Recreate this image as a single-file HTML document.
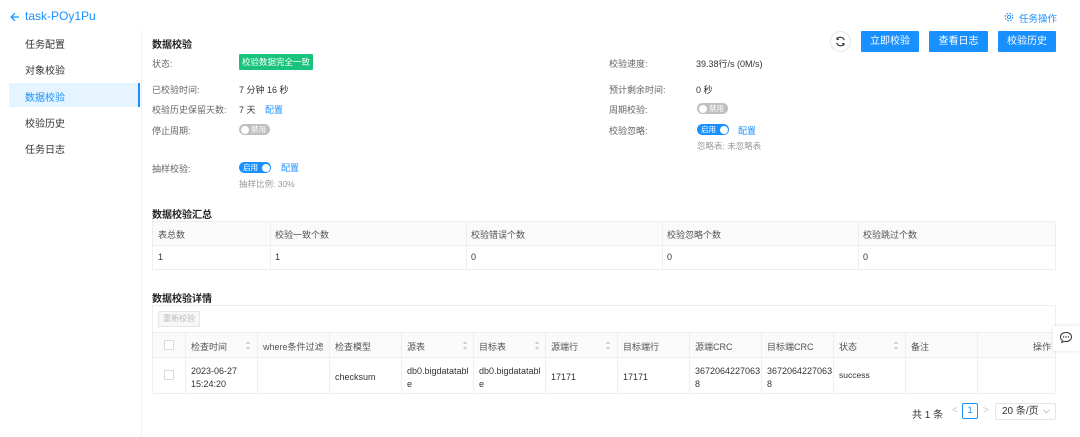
<!DOCTYPE html>
<html><head><meta charset="utf-8"><style>
*{margin:0;padding:0;box-sizing:border-box}
body{width:1080px;height:437px;background:#fff;font-family:"Liberation Sans","Noto Sans CJK SC",sans-serif;color:#333;position:relative;overflow:hidden;font-size:9px}
.a{position:absolute;white-space:nowrap}
.lbl{color:#666;font-size:9px}
.val{color:#333;font-size:9px}
.link{color:#1890ff;font-size:9px}
.nav{position:absolute;left:25px;font-size:10px;color:#333}
.btn{position:absolute;top:31px;height:21px;background:#1890ff;color:#fff;font-size:10px;text-align:center;line-height:21px;border-radius:1px}
.sw{position:absolute;height:11px;border-radius:6px;font-size:7.5px;line-height:11px;color:#fff}
.sw.off{background:#bfbfbf;width:31px}
.sw.on{background:#1890ff;width:32px}
.sw .k{position:absolute;top:1.5px;width:8px;height:8px;border-radius:50%;background:#fff}
h3{position:absolute;font-size:10px;font-weight:bold;color:#222;white-space:nowrap}
.cell{position:absolute;font-size:9px;color:#333;white-space:nowrap}
.hc{color:#555}
.vl{position:absolute;width:1px;background:#eee}
.sort{position:absolute;width:5px;height:9px}
.sort:before,.sort:after{content:"";position:absolute;left:0;border-left:2.5px solid transparent;border-right:2.5px solid transparent}
.sort:before{top:0;border-bottom:3px solid #ccc}
.sort:after{bottom:0;border-top:3px solid #ccc}
.cb{position:absolute;width:10px;height:10px;border:1px solid #d9d9d9;border-radius:1px;background:#fff}
</style></head><body>
<svg class="a" style="left:10px;top:12px" width="10" height="10" viewBox="0 0 10 10"><path d="M9 5H1.5M5 1.2L1.2 5 5 8.8" stroke="#1890ff" stroke-width="1.2" fill="none"/></svg>
<div class="a" style="left:25px;top:9px;font-size:12px;color:#1890ff">task-POy1Pu</div>
<svg class="a" style="left:1004px;top:12px" width="10" height="10" viewBox="0 0 10 10"><circle cx="5" cy="5" r="1.6" stroke="#1890ff" fill="none" stroke-width="0.9"/><circle cx="5" cy="5" r="3.8" stroke="#1890ff" fill="none" stroke-width="0.9" stroke-dasharray="2 1"/></svg>
<div class="a" style="left:1019px;top:11px;font-size:9.5px;color:#1890ff">任务操作</div>
<div class="a" style="left:141px;top:30px;width:1px;height:407px;background:#f0f0f0"></div>
<div class="nav" style="top:36px">任务配置</div>
<div class="nav" style="top:62px">对象校验</div>
<div class="a" style="left:9px;top:83px;width:131px;height:24px;background:#e6f4ff;border-right:2px solid #1890ff"></div>
<div class="nav" style="top:89px;color:#1890ff">数据校验</div>
<div class="nav" style="top:115px">校验历史</div>
<div class="nav" style="top:141px">任务日志</div>
<h3 style="left:152px;top:36px">数据校验</h3>
<div class="a" style="left:830px;top:31px;width:21px;height:21px;border:1px solid #e5e5e5;border-radius:50%"></div>
<svg class="a" style="left:835px;top:36px" width="11" height="11" viewBox="0 0 11 11"><path d="M9.3 4.2A4 4 0 0 0 2 3.2M1.7 6.8A4 4 0 0 0 9 7.8" stroke="#333" stroke-width="1.1" fill="none"/><path d="M2 1.4V3.4H4M9 9.6V7.6H7" stroke="#333" stroke-width="1" fill="none"/></svg>
<div class="btn" style="left:861px;width:58px">立即校验</div>
<div class="btn" style="left:929px;width:59px">查看日志</div>
<div class="btn" style="left:998px;width:58px">校验历史</div>

<div class="a lbl" style="left:152px;top:57px">状态:</div>
<div class="a" style="left:239px;top:54px;width:74px;height:16px;background:#19c37d;color:#fff;font-size:8.5px;line-height:16px;text-align:center;border-radius:1px">校验数据完全一致</div>
<div class="a lbl" style="left:152px;top:83px">已校验时间:</div>
<div class="a val" style="left:239px;top:83px">7 分钟 16 秒</div>
<div class="a lbl" style="left:152px;top:103px">校验历史保留天数:</div>
<div class="a val" style="left:239px;top:103px">7 天</div>
<div class="a link" style="left:265px;top:103px">配置</div>
<div class="a lbl" style="left:152px;top:124px">停止周期:</div>
<div class="sw off" style="left:239px;top:124px"><div class="k" style="left:1.5px"></div><span style="position:absolute;left:12px">禁用</span></div>
<div class="a lbl" style="left:152px;top:162px">抽样校验:</div>
<div class="sw on" style="left:239px;top:162px"><span style="position:absolute;left:4px">启用</span><div class="k" style="right:1.5px"></div></div>
<div class="a link" style="left:281px;top:161px">配置</div>
<div class="a" style="left:239px;top:178px;color:#999;font-size:8.5px">抽样比例: 30%</div>

<div class="a lbl" style="left:609px;top:57px">校验速度:</div>
<div class="a val" style="left:696px;top:57px">39.38行/s (0M/s)</div>
<div class="a lbl" style="left:609px;top:83px">预计剩余时间:</div>
<div class="a val" style="left:696px;top:83px">0 秒</div>
<div class="a lbl" style="left:609px;top:103px">周期校验:</div>
<div class="sw off" style="left:697px;top:103px"><div class="k" style="left:1.5px"></div><span style="position:absolute;left:12px">禁用</span></div>
<div class="a lbl" style="left:609px;top:124px">校验忽略:</div>
<div class="sw on" style="left:697px;top:124px"><span style="position:absolute;left:4px">启用</span><div class="k" style="right:1.5px"></div></div>
<div class="a link" style="left:738px;top:124px">配置</div>
<div class="a" style="left:697px;top:140px;color:#999;font-size:8.5px">忽略表: 未忽略表</div>

<h3 style="left:152px;top:206px">数据校验汇总</h3>
<div class="a" style="left:152px;top:221px;width:904px;height:49px;border:1px solid #eee"></div>
<div class="a" style="left:153px;top:222px;width:902px;height:24px;background:#fafafa;border-bottom:1px solid #eee"></div>
<div class="vl" style="left:270px;top:222px;height:47px"></div>
<div class="vl" style="left:466px;top:222px;height:47px"></div>
<div class="vl" style="left:662px;top:222px;height:47px"></div>
<div class="vl" style="left:858px;top:222px;height:47px"></div>
<div class="cell hc" style="left:158px;top:228px">表总数</div>
<div class="cell hc" style="left:275px;top:228px">校验一致个数</div>
<div class="cell hc" style="left:471px;top:228px">校验错误个数</div>
<div class="cell hc" style="left:667px;top:228px">校验忽略个数</div>
<div class="cell hc" style="left:863px;top:228px">校验跳过个数</div>
<div class="cell" style="left:158px;top:252px">1</div>
<div class="cell" style="left:275px;top:252px">1</div>
<div class="cell" style="left:471px;top:252px">0</div>
<div class="cell" style="left:667px;top:252px">0</div>
<div class="cell" style="left:863px;top:252px">0</div>

<h3 style="left:152px;top:290px">数据校验详情</h3>
<div class="a" style="left:152px;top:305px;width:904px;height:89px;border:1px solid #eee"></div>
<div class="a" style="left:158px;top:311px;width:42px;height:16px;border:1px solid #e5e5e5;background:#f7f7f7;color:#bbb;font-size:8px;line-height:14px;text-align:center">重新校验</div>
<div class="a" style="left:153px;top:332px;width:902px;height:26px;background:#fafafa;border-top:1px solid #eee;border-bottom:1px solid #eee"></div>
<div class="vl" style="left:185px;top:333px;height:60px"></div>
<div class="vl" style="left:257px;top:333px;height:60px"></div>
<div class="vl" style="left:329px;top:333px;height:60px"></div>
<div class="vl" style="left:401px;top:333px;height:60px"></div>
<div class="vl" style="left:473px;top:333px;height:60px"></div>
<div class="vl" style="left:545px;top:333px;height:60px"></div>
<div class="vl" style="left:617px;top:333px;height:60px"></div>
<div class="vl" style="left:689px;top:333px;height:60px"></div>
<div class="vl" style="left:761px;top:333px;height:60px"></div>
<div class="vl" style="left:833px;top:333px;height:60px"></div>
<div class="vl" style="left:905px;top:333px;height:60px"></div>
<div class="vl" style="left:977px;top:333px;height:60px"></div>
<div class="cb" style="left:164px;top:340px"></div>
<div class="cell hc" style="left:191px;top:340px">检查时间</div><div class="sort" style="left:246px;top:341px"></div>
<div class="cell hc" style="left:263px;top:340px">where条件过滤</div>
<div class="cell hc" style="left:335px;top:340px">检查模型</div>
<div class="cell hc" style="left:407px;top:340px">源表</div><div class="sort" style="left:463px;top:341px"></div>
<div class="cell hc" style="left:479px;top:340px">目标表</div><div class="sort" style="left:535px;top:341px"></div>
<div class="cell hc" style="left:551px;top:340px">源端行</div><div class="sort" style="left:606px;top:341px"></div>
<div class="cell hc" style="left:623px;top:340px">目标端行</div>
<div class="cell hc" style="left:695px;top:340px">源端CRC</div>
<div class="cell hc" style="left:767px;top:340px">目标端CRC</div>
<div class="cell hc" style="left:839px;top:340px">状态</div><div class="sort" style="left:894px;top:341px"></div>
<div class="cell hc" style="left:911px;top:340px">备注</div>
<div class="cell hc" style="left:1033px;top:340px">操作</div>
<div class="cb" style="left:164px;top:370px"></div>
<div class="cell" style="left:191px;top:365px;line-height:13px">2023-06-27<br>15:24:20</div>
<div class="cell" style="left:335px;top:372px">checksum</div>
<div class="cell" style="left:407px;top:365px;line-height:13px">db0.bigdatatabl<br>e</div>
<div class="cell" style="left:479px;top:365px;line-height:13px">db0.bigdatatabl<br>e</div>
<div class="cell" style="left:551px;top:372px">17171</div>
<div class="cell" style="left:623px;top:372px">17171</div>
<div class="cell" style="left:695px;top:365px;line-height:13px">3672064227063<br>8</div>
<div class="cell" style="left:767px;top:365px;line-height:13px">3672064227063<br>8</div>
<div class="cell" style="left:839px;top:370px;font-size:8.5px">success</div>

<div class="a" style="left:912px;top:406px;font-size:10px;color:#333">共 1 条</div>
<div class="a" style="left:952px;top:405px;font-size:10px;color:#ccc">&lt;</div>
<div class="a" style="left:962px;top:403px;width:16px;height:16px;border:1px solid #1890ff;border-radius:2px;color:#1890ff;font-size:9.5px;line-height:14px;text-align:center">1</div>
<div class="a" style="left:983px;top:405px;font-size:10px;color:#ccc">&gt;</div>
<div class="a" style="left:995px;top:403px;width:61px;height:17px;border:1px solid #e5e5e5;border-radius:2px;font-size:10px;line-height:15px;padding-left:6px;color:#333">20 条/页</div>
<svg class="a" style="left:1043px;top:409px" width="7" height="5" viewBox="0 0 7 5"><path d="M0.5 0.8L3.5 3.8 6.5 0.8" stroke="#bbb" fill="none" stroke-width="0.8"/></svg>

<div class="a" style="left:1053px;top:326px;width:27px;height:25px;background:#fff;box-shadow:0 0 4px rgba(0,0,0,0.12)"></div>
<svg class="a" style="left:1059px;top:331px" width="14" height="13" viewBox="0 0 14 13"><path d="M7 1.5C3.7 1.5 1.5 3.5 1.5 6c0 1.4 0.7 2.6 1.8 3.4L2.8 11.5 5.2 10.3C5.8 10.5 6.4 10.5 7 10.5c3.3 0 5.5-2 5.5-4.5S10.3 1.5 7 1.5z" stroke="#333" stroke-width="1" fill="none"/><circle cx="4.6" cy="6" r="0.7" fill="#333"/><circle cx="7" cy="6" r="0.7" fill="#333"/><circle cx="9.4" cy="6" r="0.7" fill="#333"/></svg>
</body></html>
